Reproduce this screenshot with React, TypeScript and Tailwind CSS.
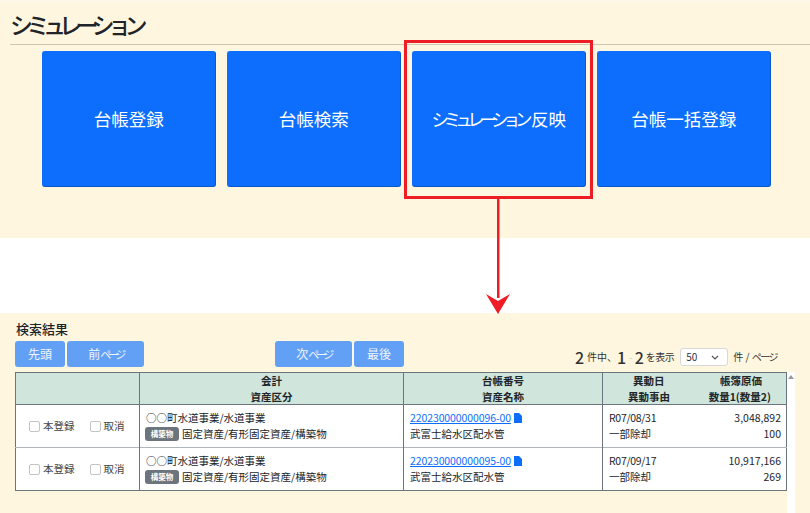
import React from 'react';

const font = "font-['Noto_Sans_CJK_JP','Liberation_Sans',sans-serif]";

const rows = [
  {
    kind: '構築物',
    no: '220230000000096-00',
    name: '武富士給水区配水管',
    date: 'R07/08/31',
    reason: '一部除却',
    price: '3,048,892',
    qty: '100',
  },
  {
    kind: '構築物',
    no: '220230000000095-00',
    name: '武富士給水区配水管',
    date: 'R07/09/17',
    reason: '一部除却',
    price: '10,917,166',
    qty: '269',
  },
];

function MenuButton({ children }: { children: React.ReactNode }) {
  return (
    <button className="h-[136px] w-[173.5px] rounded-[3px] border border-[#0d6efd] border-r-[#0a58ca] border-b-[#0a58ca] bg-[#0d6efd] text-[17.5px] text-white">
      {children}
    </button>
  );
}

function PageButton({ children, width }: { children: React.ReactNode; width: string }) {
  return (
    <button className={`h-[26px] ${width} rounded-[3px] bg-[#62a0f6] text-[12px] text-white/90`}>
      {children}
    </button>
  );
}

function Check({ label }: { label: string }) {
  return (
    <span className="flex items-center gap-[3px]">
      <span className="h-[11px] w-[11px] rounded-[2px] border border-[#c4c4c4] bg-white" />
      {label}
    </span>
  );
}

export default function App() {
  return (
    <div className={`relative h-[513px] w-[810px] overflow-hidden bg-white text-[#212529] ${font}`}>
      {/* Top panel */}
      <div className="h-[238px] border-t-[3px] border-[#fdf7e8] bg-[#fff6e0] pl-[10px] pt-[6px]">
        <h1 className="h-[36px] border-b border-[#cfc6b0] text-[23px] font-medium leading-[30px] tracking-[-6.5px]">
          シミュレーション
        </h1>
        <div className="ml-[32px] mt-[6px] flex gap-[11.5px]">
          <MenuButton>台帳登録</MenuButton>
          <MenuButton>台帳検索</MenuButton>
          <MenuButton>
            <span className="tracking-[-5.5px]">シミュレーション</span>
            <span className="ml-[4px]">反映</span>
          </MenuButton>
          <MenuButton>台帳一括登録</MenuButton>
        </div>
      </div>

      <div className="h-[75px]" />

      {/* Search result */}
      <div className="h-[200px] bg-[#fff6e0] pl-[15px]">
        <div className="pl-px pt-[7px] text-[13px] font-medium leading-[17px]">検索結果</div>
        <div className="mt-[4px] flex h-[26px] w-[772px] items-start">
          <div className="flex gap-[2px]">
            <PageButton width="w-[50px]">先頭</PageButton>
            <PageButton width="w-[77px]">
              前<span className="text-[11px] tracking-[-3.5px]">ページ</span>
            </PageButton>
          </div>
          <div className="ml-[131px] flex gap-[2px]">
            <PageButton width="w-[77px]">
              次<span className="text-[11px] tracking-[-3.5px]">ページ</span>
            </PageButton>
            <PageButton width="w-[50px]">最後</PageButton>
          </div>
          <div className="ml-auto mr-[10px] mt-[6px] flex items-center text-[10px] leading-[20px] text-[#333]">
            <span className="text-[16px] font-medium">2</span>
            <span className="ml-[3px]">件中、</span>
            <span className="text-[16px] font-medium">1</span>
            <span className="ml-[3px] mr-[2px] text-[#ccc]">-</span>
            <span className="text-[16px] font-medium">2</span>
            <span className="ml-[2px] tracking-[-0.5px]">を表示</span>
            <span className="ml-[6px] flex h-[18px] w-[48px] items-center justify-between rounded-[3px] border border-[#d8d8d8] bg-white pl-[5px] pr-[8px] text-[10px]">
              50
              <svg width="8" height="5" viewBox="0 0 8 5" fill="none" stroke="#555" strokeWidth="1.2">
                <path d="M1 1l3 3 3-3" />
              </svg>
            </span>
            <span className="ml-[5px]">
              件 / <span className="tracking-[-1.5px]">ページ</span>
            </span>
          </div>
        </div>

        <div className="mt-[5px] flex items-start">
          <table className="w-[772px] table-fixed border-collapse border border-[#6c757d] text-[10.5px] leading-[16px]">
            <colgroup>
              <col className="w-[124px]" />
              <col className="w-[264px]" />
              <col className="w-[199px]" />
              <col />
            </colgroup>
            <thead className="leading-[15.5px]">
              <tr className="h-[31px] bg-[#d0e5db]">
                <th className="border-r border-b border-[#6c757d]" />
                <th className="border-r border-b border-[#6c757d] font-semibold">
                  <div>会計</div>
                  <div>資産区分</div>
                </th>
                <th className="border-r border-b border-[#6c757d] font-semibold">
                  <div>台帳番号</div>
                  <div>資産名称</div>
                </th>
                <th className="border-b border-[#6c757d] font-semibold">
                  <div className="flex justify-between pl-[30px] pr-[24px]">
                    <span>異動日</span>
                    <span>帳簿原価</span>
                  </div>
                  <div className="flex justify-between pl-[25px] pr-[15px]">
                    <span>異動事由</span>
                    <span>数量1(数量2)</span>
                  </div>
                </th>
              </tr>
            </thead>
            <tbody className="bg-white">
              {rows.map((r, i) => (
                <tr key={r.no} className={`h-[43px] ${i === 0 ? 'border-b border-[#b0b5b9]' : ''}`}>
                  <td className="border-r border-[#6c757d] pl-[13px]">
                    <div className="flex gap-[15px] text-[#444]">
                      <Check label="本登録" />
                      <Check label="取消" />
                    </div>
                  </td>
                  <td className="border-r border-[#6c757d] pl-[5px]">
                    <div className="pl-px">○○町水道事業/水道事業</div>
                    <div className="flex items-center gap-[3px]">
                      <span className="flex h-[14px] w-[34px] items-center justify-center rounded-[3px] bg-[#6c757d] text-[7.5px] font-bold text-white">
                        {r.kind}
                      </span>
                      固定資産/有形固定資産/構築物
                    </div>
                  </td>
                  <td className="border-r border-[#6c757d] pl-[6px]">
                    <div className="flex items-center gap-[3px]">
                      <span className="tracking-[-0.1px] text-[#0d6efd] underline">{r.no}</span>
                      <svg width="8" height="10" viewBox="0 0 8 10" fill="#0d6efd">
                        <path d="M0 0h5l3 3v7H0z" />
                      </svg>
                    </div>
                    <div>{r.name}</div>
                  </td>
                  <td className="pl-[6px] pr-[5px]">
                    <div className="flex justify-between">
                      <span className="tracking-[-0.3px]">{r.date}</span>
                      <span>{r.price}</span>
                    </div>
                    <div className="flex justify-between">
                      <span>{r.reason}</span>
                      <span>{r.qty}</span>
                    </div>
                  </td>
                </tr>
              ))}
            </tbody>
          </table>
        </div>
        {/* Scrollbar track */}
        <div className="absolute left-[787px] top-[372px] flex h-[141px] w-[8px] justify-center bg-white pt-[3px]">
          <span className="h-0 w-0 border-x-[3px] border-b-[4px] border-x-transparent border-b-[#9a9a9a]" />
        </div>
      </div>

      {/* Red annotation */}
      <div className="absolute left-[404px] top-[40px] h-[159px] w-[189px] border-[3px] border-[#ee1c25]" />
      <svg className="absolute left-[484px] top-[198px]" width="28" height="118" viewBox="0 0 28 118" fill="#ee1c25">
        <rect x="13" y="0" width="2.5" height="100" />
        <path d="M2 96 L14 103 L26 96 L14 116 Z" />
      </svg>
    </div>
  );
}
